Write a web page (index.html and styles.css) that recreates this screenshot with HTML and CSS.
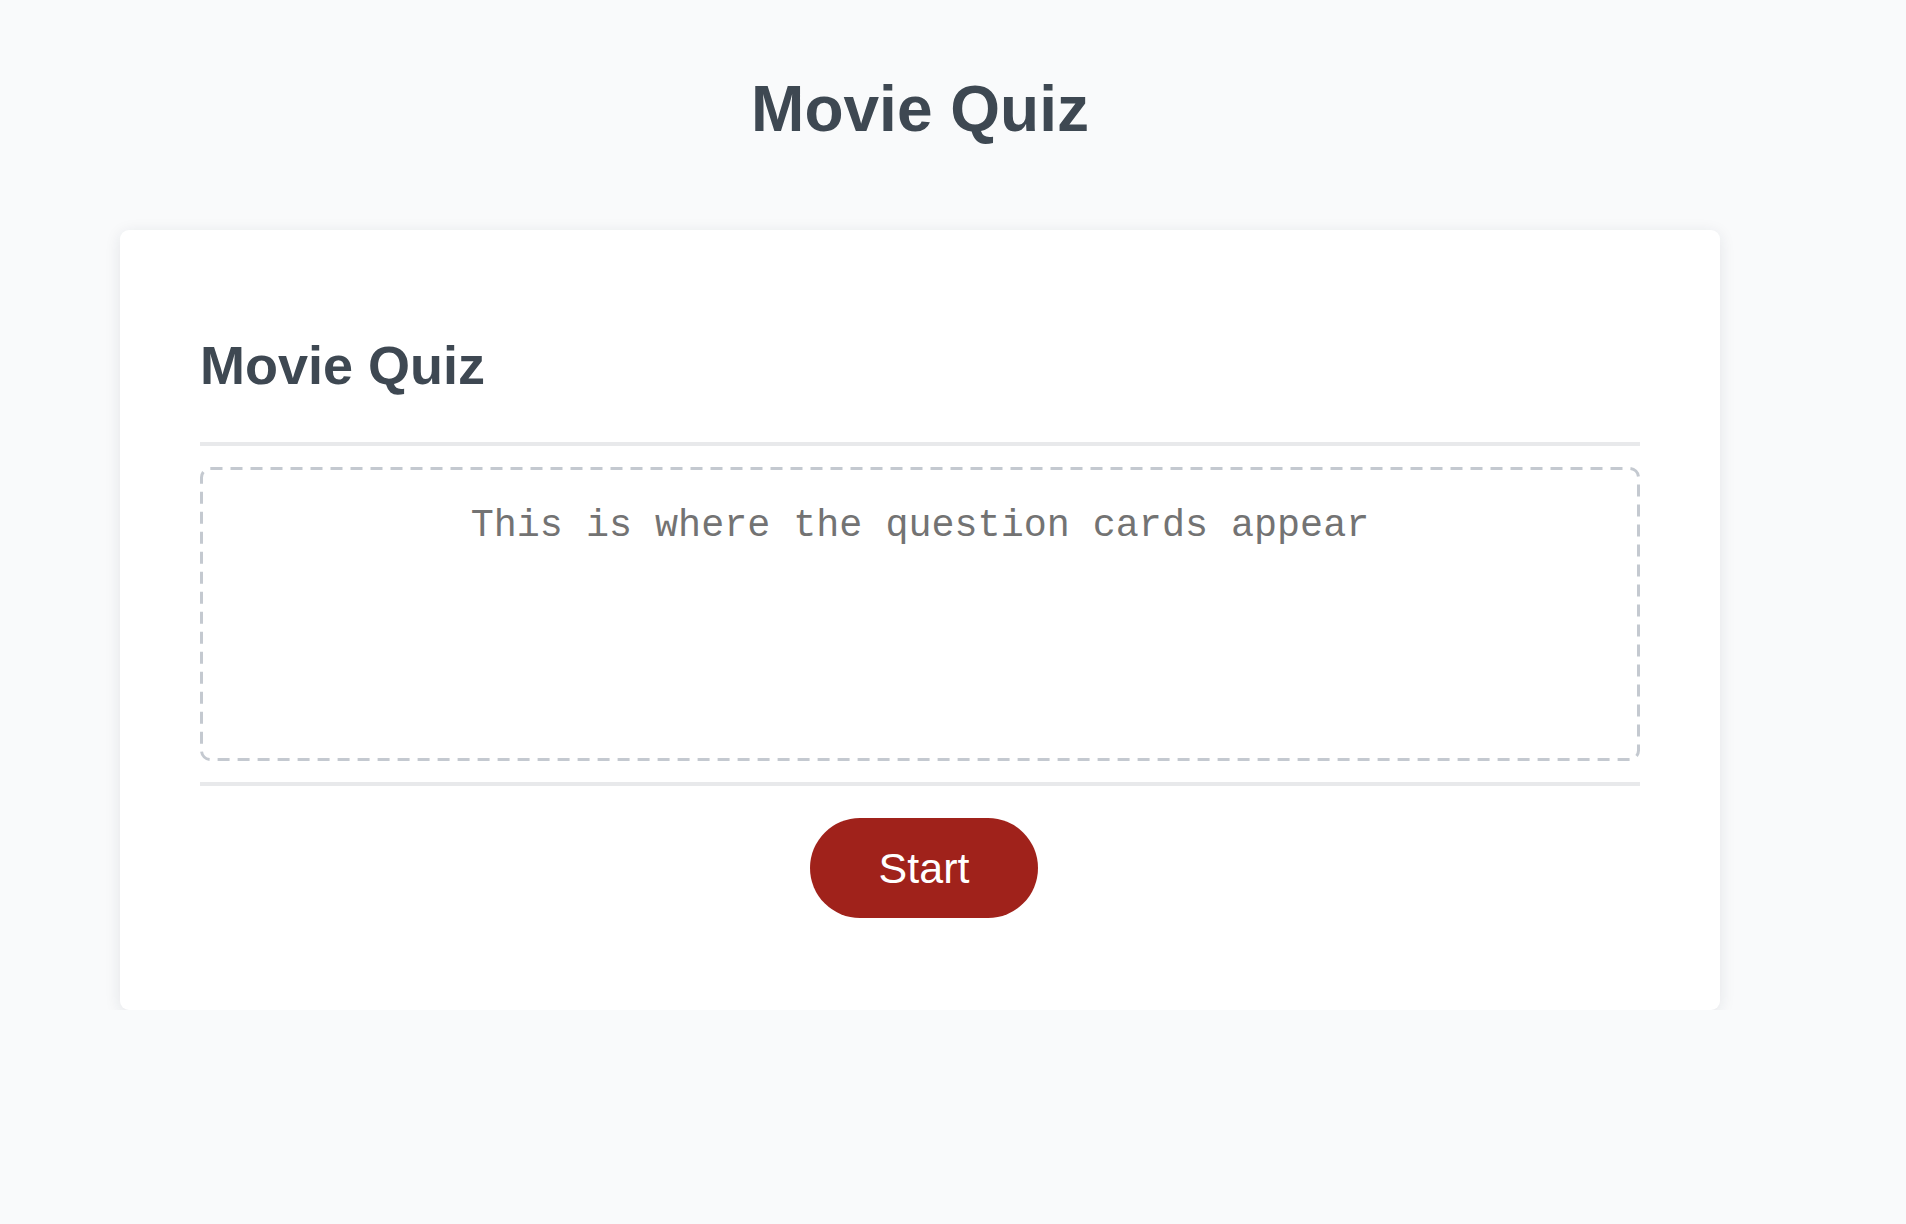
FILE: index.html
```html
<!DOCTYPE html>
<html lang="en">
<head>
<meta charset="utf-8">
<title>Movie Quiz</title>
<link rel="stylesheet" href="styles.css">
</head>
<body>
<div class="wrap">
  <h1 class="page-title">Movie Quiz</h1>
  <main class="card">
    <h2 class="card-title">Movie Quiz</h2>
    <hr class="rule rule-top">
    <section class="cards-area">
      <svg class="dash-frame" aria-hidden="true"><rect class="dash-rect" x="1.5" y="1.5" rx="9" ry="9"></rect></svg>
      <p class="placeholder">This is where the question cards appear</p>
    </section>
    <hr class="rule rule-bottom">
    <div class="actions">
      <button class="start-btn" type="button">Start</button>
    </div>
  </main>
</div>
</body>
</html>
```
FILE: styles.css
```css
html, body {
  margin: 0;
  padding: 0;
  background: #f9fafb;
}

body {
  font-family: "Liberation Sans", Arial, sans-serif;
  color: #3e4852;
}

.wrap {
  width: 1600px;
  margin-left: 120px;
  padding-top: 73px;
}

.page-title {
  margin: 0;
  font-size: 64px;
  line-height: 73px;
  font-weight: 700;
  text-align: center;
}

.card {
  margin-top: 84px;
  background: #ffffff;
  border-radius: 9px;
  box-shadow: 0 3px 16px rgba(30, 40, 60, 0.1);
  padding: 104px 80px 92px;
  display: flex;
  flex-direction: column;
}

.card-title {
  margin: 0;
  font-size: 54px;
  line-height: 62px;
  font-weight: 700;
}

.rule {
  margin: 0;
  border: 0;
  height: 4px;
  background: #e8e9eb;
}

.rule-top {
  margin-top: 46px;
}

.cards-area {
  position: relative;
  margin-top: 21px;
  height: 294px;
  box-sizing: border-box;
  border-radius: 10px;
  padding-top: 37px;
}

.dash-frame {
  position: absolute;
  inset: 0;
  width: 100%;
  height: 100%;
  overflow: visible;
}

.dash-rect {
  width: calc(100% - 3px);
  height: calc(100% - 3px);
  fill: none;
  stroke: #c4c9d0;
  stroke-width: 3;
  stroke-dasharray: 12 8;
}

.placeholder {
  position: relative;
  margin: 0;
  font-family: "Liberation Mono", "Courier New", monospace;
  font-size: 38.4px;
  color: #737373;
  text-align: center;
}

.rule-bottom {
  margin-top: 21px;
}

.actions {
  margin-top: 32px;
  display: flex;
  justify-content: center;
}

.start-btn {
  width: 228px;
  height: 100px;
  margin-left: 8px;
  border: 0;
  border-radius: 50px;
  background: #a0221b;
  color: #ffffff;
  font-family: "Liberation Sans", Arial, sans-serif;
  font-size: 43px;
  padding: 0;
  cursor: pointer;
}
```
